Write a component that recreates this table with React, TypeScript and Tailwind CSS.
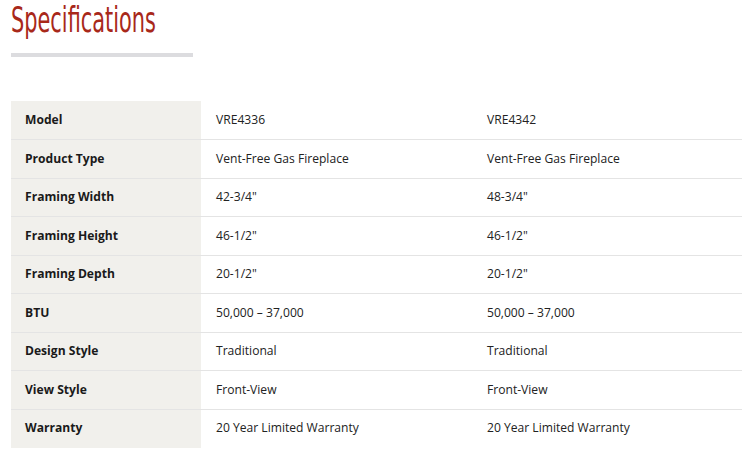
import React from 'react';

const rows: [string, string, string][] = [
  ['Model', 'VRE4336', 'VRE4342'],
  ['Product Type', 'Vent-Free Gas Fireplace', 'Vent-Free Gas Fireplace'],
  ['Framing Width', '42-3/4"', '48-3/4"'],
  ['Framing Height', '46-1/2"', '46-1/2"'],
  ['Framing Depth', '20-1/2"', '20-1/2"'],
  ['BTU', '50,000 – 37,000', '50,000 – 37,000'],
  ['Design Style', 'Traditional', 'Traditional'],
  ['View Style', 'Front-View', 'Front-View'],
  ['Warranty', '20 Year Limited Warranty', '20 Year Limited Warranty'],
];

export default function App() {
  return (
    <div className="w-[750px] h-[456px] bg-white overflow-hidden px-[11px] font-['Open_Sans',sans-serif] text-[#222]">
      <h2 className="h-[40px] whitespace-nowrap">
        <span className="inline-block origin-left scale-x-[0.58] text-[36px] leading-[40px] text-[#a8281a] font-['DejaVu_Sans',sans-serif]">
          Specifications
        </span>
      </h2>
      <div className="mt-[13px] h-[4px] w-[182px] bg-[#dcdcdf]" />

      <table className="mt-[44px] w-[731px] border-collapse text-[12.1px]">
        <tbody>
          {rows.map(([label, a, b], i) => (
            <tr
              key={label}
              className={i < rows.length - 1 ? 'h-[38.5px] border-b border-[#e4e4e4]' : 'h-[38.5px]'}
            >
              <td className="w-[190px] bg-[#f1f0ec] pl-[14px] font-bold text-[#1a1a1a]">{label}</td>
              <td className="w-[271px] pl-[15px]">{a}</td>
              <td className="pl-[15px]">{b}</td>
            </tr>
          ))}
        </tbody>
      </table>
    </div>
  );
}
